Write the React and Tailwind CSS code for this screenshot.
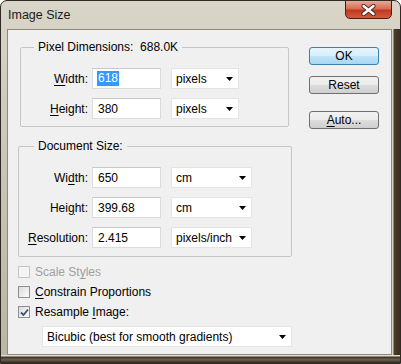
import React from "react";

const U = ({ children }) => <span className="underline underline-offset-[2px]">{children}</span>;

function Arrow() {
  return (
    <svg width="7" height="4" viewBox="0 0 7 4" className="shrink-0">
      <path d="M0 0H7L3.5 4Z" fill="#000" />
    </svg>
  );
}

function Input({ value, selected }) {
  return (
    <div className="w-[69px] h-[21px] bg-white border border-[#dcdcdc] border-t-[#c8c8c8] flex items-center pl-[4px]">
      {selected ? (
        <span className="bg-[#3399ff] text-white px-[1px] leading-[15px]">{value}</span>
      ) : (
        <span className="px-[1px]">{value}</span>
      )}
    </div>
  );
}

function Select({ value, w }) {
  return (
    <div className={`${w} h-[21px] bg-white border border-[#e4e4e4] flex items-center justify-between pl-[4px] pr-[5px]`}>
      <span>{value}</span>
      <Arrow />
    </div>
  );
}

function Row({ label, value, unit, selected, selW }) {
  return (
    <div className="flex items-center h-[21px]">
      <div className="w-[67px] text-right mr-[4px] whitespace-nowrap">{label}</div>
      <Input value={value} selected={selected} />
      <div className="ml-[10px]">
        <Select value={unit} w={selW} />
      </div>
    </div>
  );
}

function Check({ checked, disabled, children }) {
  return (
    <div className="flex items-center h-[20px]">
      <div
        className={`w-[12px] h-[12px] border flex items-center justify-center ${
          disabled ? "border-[#c4c4c4] bg-[#f4f4f4]" : "border-[#8e8f8f] bg-[linear-gradient(135deg,#dcdcdc,#fbfbfb)]"
        }`}
      >
        {checked && (
          <svg width="9" height="9" viewBox="0 0 9 9">
            <path d="M1 4.5L3.5 7L8 1.5" fill="none" stroke="#3b4f7c" strokeWidth="1.8" />
          </svg>
        )}
      </div>
      <span className={`ml-[5px] ${disabled ? "text-[#a0a0a0]" : "text-black"}`}>{children}</span>
    </div>
  );
}

function Btn({ children, primary }) {
  return (
    <div
      className={`w-[70px] h-[18px] rounded-[3px] border flex items-center justify-center ${
        primary
          ? "border-[#3c7fb1] bg-[linear-gradient(to_bottom,#e5f4fc_0%,#d9eefa_50%,#c0e4f7_51%,#a7d7f2_100%)]"
          : "border-[#707070] bg-[linear-gradient(to_bottom,#f2f2f2_0%,#ebebeb_50%,#dddddd_51%,#cfcfcf_100%)]"
      }`}
    >
      {children}
    </div>
  );
}

export default function App() {
  return (
    <div
      className="w-[401px] h-[364px] flex flex-col rounded-t-[7px] overflow-hidden border border-[#2e2a24] bg-[linear-gradient(to_bottom,#d9d6c9_0%,#cfcbbb_30%,#b9b5a2_100%)] text-[12px] text-black"
      style={{ fontFamily: '"Liberation Sans", Arial, sans-serif' }}
    >
      <div className="h-[28px] flex items-start shrink-0">
        <span className="ml-[7px] mt-[7px] text-[12.5px] leading-[14px] text-[#1a1a1a]">Image Size</span>
        <div className="flex-1" />
        <div className="w-[47px] h-[19px] mr-[8px] -mt-px rounded-b-[5px] border border-[#4a1c12] bg-[linear-gradient(to_bottom,#e9a996_0%,#d76d55_45%,#c0391f_55%,#d65a3e_100%)] flex items-center justify-center">
          <svg width="15" height="12" viewBox="0 0 15 12">
            <path d="M2.5 2L12.5 10M12.5 2L2.5 10" stroke="#4a2a20" strokeWidth="4.2" strokeLinecap="round" />
            <path d="M2.5 2L12.5 10M12.5 2L2.5 10" stroke="#ffffff" strokeWidth="2.4" strokeLinecap="round" />
          </svg>
        </div>
      </div>
      <div className="flex flex-1 min-h-0">
        <div className="w-[6px] shrink-0" />
        <div className="w-[385px] shrink-0 border border-[#8c887a] bg-[#f0f0f0] flex">
          <div className="w-[291px] shrink-0 pl-[10px] pt-[10px] flex flex-col">
            <fieldset className="ml-[2px] w-[269px] border border-[#c6c6c6] pb-[7px] rounded-[2px]">
              <legend className="ml-[13px] px-[4px] leading-[14px]">
                Pixel Dimensions:&nbsp;&nbsp;688.0K
              </legend>
              <div className="mt-[14px] flex flex-col gap-[9px]">
                <Row label={<><U>W</U>idth:</>} value="618" unit="pixels" selected selW="w-[68px]" />
                <Row label={<><U>H</U>eight:</>} value="380" unit="pixels" selW="w-[68px]" />
              </div>
            </fieldset>
            <fieldset className="mt-[12px] w-[274px] border border-[#c6c6c6] pb-[8px] rounded-[2px]">
              <legend className="ml-[15px] px-[4px] leading-[14px]">Document Size:</legend>
              <div className="mt-[14px] flex flex-col gap-[9px] pl-[2px]">
                <Row label={<>Wi<U>d</U>th:</>} value="650" unit="cm" selW="w-[81px]" />
                <Row label={<>Hei<U>g</U>ht:</>} value="399.68" unit="cm" selW="w-[81px]" />
                <Row label={<><U>R</U>esolution:</>} value="2.415" unit="pixels/inch" selW="w-[81px]" />
              </div>
            </fieldset>
            <div className="mt-[5px] flex flex-col">
              <Check disabled>Scale St<U>y</U>les</Check>
              <Check><U>C</U>onstrain Proportions</Check>
              <Check checked>Resample <U>I</U>mage:</Check>
            </div>
            <div className="mt-[4px] ml-[24px]">
              <Select value="Bicubic (best for smooth gradients)" w="w-[250px]" />
            </div>
          </div>
          <div className="ml-[10px] pt-[17px] flex flex-col">
            <Btn primary>OK</Btn>
            <div className="mt-[11px]">
              <Btn>Reset</Btn>
            </div>
            <div className="mt-[17px]">
              <Btn><U>A</U>uto...</Btn>
            </div>
          </div>
        </div>
        <div className="flex-1 bg-[linear-gradient(to_right,#d8d4c6_0px,#d8d4c6_1px,#4a3b2c_2px,#3a2e22_100%)]" />
      </div>
      <div className="h-[8px] shrink-0 bg-[linear-gradient(to_bottom,#e0ddd2_0px,#e0ddd2_1px,#3d3124_2px,#6e6150_60%,#2e251b_100%)]" />
    </div>
  );
}
